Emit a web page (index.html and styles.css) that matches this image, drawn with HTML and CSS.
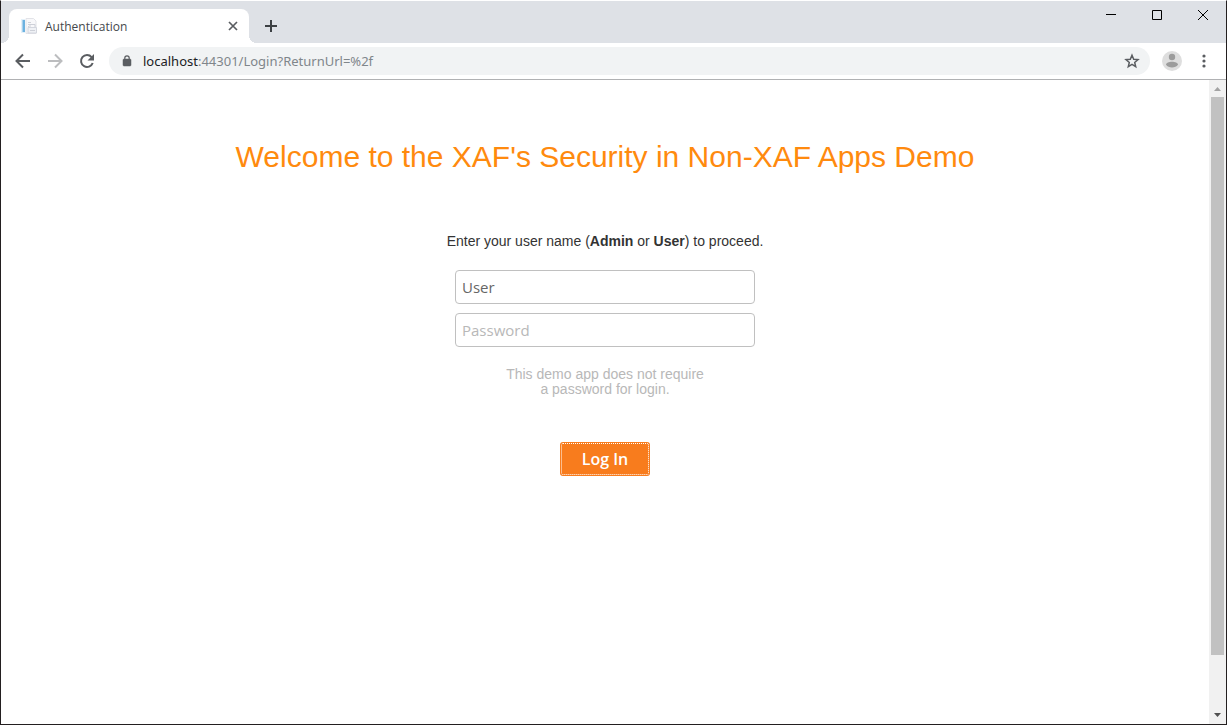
FILE: index.html
```html
<!DOCTYPE html>
<html lang="en">
<head>
<meta charset="utf-8">
<title>Authentication</title>
<link rel="stylesheet" href="styles.css">
</head>
<body>
<div class="window">
  <header class="tab-strip">
    <div class="tab">
      <svg class="favicon" width="16" height="16" viewBox="0 0 16 16">
        <path d="M5 .5h7.500l2.500 2.500v12.500H5z" fill="#f8f8fa" stroke="#e2e3e8"/>
        <path d="M0 1h4v14H0z" fill="#e3f0f9"/>
        <path d="M1.500 2H4v12H1.500z" fill="#6cb2e0"/>
        <path d="M7 4.500h3M7 6.500h2M7 8.500h1" stroke="#d0d2d8"/>
        <path d="M7 9.500h8.500v5.500H7z" fill="#eff1f5" stroke="#d3d6de"/>
        <path d="M9 12.500h5M9 9V6.500h5V9" fill="none" stroke="#cdd0d8"/>
      </svg>
      <span class="tab-title">Authentication</span>
      <button class="icon-button tab-close" aria-label="Close tab">
        <svg width="10" height="10" viewBox="0 0 10 10"><path d="M1 1l8 8M9 1L1 9" stroke="#5a5d61" stroke-width="1.700"/></svg>
      </button>
    </div>
    <button class="icon-button new-tab" aria-label="New tab">
      <svg width="12" height="12" viewBox="0 0 12 12"><path d="M6 0v12M0 6h12" stroke="#3c4043" stroke-width="2"/></svg>
    </button>
    <div class="window-controls">
      <button class="icon-button control" aria-label="Minimize"><svg width="10" height="10" viewBox="0 0 10 10"><path d="M0 4.500h10" stroke="#000"/></svg></button>
      <button class="icon-button control" aria-label="Maximize"><svg width="10" height="10" viewBox="0 0 10 10"><path d="M.5.5h9v9h-9z" fill="none" stroke="#000"/></svg></button>
      <button class="icon-button control" aria-label="Close"><svg width="10" height="10" viewBox="0 0 10 10"><path d="M0 0l10 10M10 0L0 10" stroke="#000"/></svg></button>
    </div>
  </header>

  <nav class="toolbar">
    <button class="icon-button nav-button" aria-label="Back"><svg width="16" height="16" viewBox="0 0 16 16"><path d="M15 8H2M8 1.500L1.500 8 8 14.500" fill="none" stroke="#5a5d61" stroke-width="2"/></svg></button>
    <button class="icon-button nav-button" aria-label="Forward"><svg width="16" height="16" viewBox="0 0 16 16"><path d="M1 8h13M8 1.500L14.500 8 8 14.500" fill="none" stroke="#bcbdbf" stroke-width="2"/></svg></button>
    <button class="icon-button nav-button" aria-label="Reload"><svg width="16" height="16" viewBox="0 0 16 16"><path d="M13.700 10A6 6 0 1 1 12.600 4.100" fill="none" stroke="#5a5d61" stroke-width="2"/><path d="M15 1v6.500H8.500z" fill="#5a5d61"/></svg></button>
    <div class="address-bar">
      <svg class="lock" width="10" height="12" viewBox="0 0 10 12"><path d="M2 4h6a1 1 0 0 1 1 1v5a1 1 0 0 1-1 1H2a1 1 0 0 1-1-1V5a1 1 0 0 1 1-1z" fill="#5a5d61" stroke="#5a5d61" stroke-width=".5"/><path d="M2.800 5V3a2.200 2.200 0 0 1 4.400 0v2" fill="none" stroke="#5a5d61" stroke-width="1.200"/></svg>
      <span class="url"><span class="host">localhost</span>:44301/Login?ReturnUrl=%2f</span>
      <button class="icon-button" aria-label="Bookmark"><svg width="16" height="16" viewBox="0 0 16 16"><path d="M8 2.200l1.700 4 4.300.4-3.300 2.800 1 4.200L8 11.400l-3.700 2.200 1-4.200L2 6.600l4.300-.4z" fill="none" stroke="#5a5d61" stroke-width="1.500"/></svg></button>
    </div>
    <button class="icon-button profile" aria-label="Profile"><svg width="20" height="20" viewBox="0 0 20 20"><circle cx="10" cy="10" r="10" fill="#dedede"/><circle cx="10" cy="6" r="3.200" fill="#9c9c9c"/><path d="M4 13.800C4 12 7 10.800 10 10.800s6 1.200 6 3c-1.300 1.800-3.500 2.800-6 2.800s-4.700-1-6-2.800z" fill="#9c9c9c"/></svg></button>
    <button class="icon-button" aria-label="Menu"><svg width="16" height="16" viewBox="0 0 16 16"><g fill="#5a5d61"><circle cx="8" cy="3" r="1.600"/><circle cx="8" cy="8" r="1.600"/><circle cx="8" cy="13" r="1.600"/></g></svg></button>
  </nav>

  <div class="viewport">
    <main class="page">
      <h1 class="heading">Welcome to the XAF's Security in Non-XAF Apps Demo</h1>
      <form class="login">
        <p class="intro">Enter your user name (<b>Admin</b> or <b>User</b>) to proceed.</p>
        <input class="field" type="text" aria-label="User name" value="User">
        <input class="field" type="password" aria-label="Password" placeholder="Password">
        <p class="note">This demo app does not require<br>a password for login.</p>
        <button class="submit" type="button">Log In</button>
      </form>
    </main>
    <div class="scrollbar">
      <svg class="arrow" width="17" height="17" viewBox="0 0 17 17"><path d="M5 11l3.500-4 3.500 4z" fill="#a3a3a3"/></svg>
      <div class="track"><div class="thumb"></div></div>
      <svg class="arrow" width="17" height="17" viewBox="0 0 17 17"><path d="M5 6h7l-3.500 4z" fill="#505050"/></svg>
    </div>
  </div>
</div>
</body>
</html>
```
FILE: styles.css
```css
* { box-sizing: border-box; }

body {
  margin: 0;
  font-family: "Liberation Sans", Arial, sans-serif;
  background: #fff;
}

.window {
  display: flex;
  flex-direction: column;
  min-height: 100vh;
  border: 1px solid #231f20;
  border-top-color: #fff;
}

.icon-button {
  display: flex;
  align-items: center;
  justify-content: center;
  padding: 0;
  border: 0;
  background: none;
}

.tab-strip {
  display: flex;
  height: 42px;
  padding-left: 8px;
  background: #dee1e6;
}

.tab {
  position: relative;
  display: flex;
  align-items: center;
  width: 240px;
  margin-top: 8px;
  padding: 0 11px 0 12px;
  border-radius: 8px 8px 0 0;
  background: #fff;
}

.tab::before,
.tab::after {
  content: "";
  position: absolute;
  bottom: 0;
  width: 8px;
  height: 8px;
}

.tab::before {
  right: 100%;
  background: radial-gradient(circle at 0 0, transparent 8px, #fff 8px);
}

.tab::after {
  left: 100%;
  background: radial-gradient(circle at 100% 0, transparent 8px, #fff 8px);
}

.tab-title {
  flex: 1;
  margin-left: 8px;
  font: 12px "Open Sans", sans-serif;
  color: #45484c;
}

.new-tab {
  width: 28px;
  margin: 8px 0 0 8px;
}

.window-controls {
  display: flex;
  height: 28px;
  margin-left: auto;
}

.control { width: 46px; }

.toolbar {
  display: flex;
  align-items: center;
  height: 37px;
  padding: 0 14px 0 6px;
  border-bottom: 1px solid #b0b1b3;
}

.nav-button {
  width: 32px;
  height: 28px;
}

.address-bar {
  display: flex;
  flex: 1;
  align-items: center;
  height: 28px;
  margin-left: 6px;
  padding: 0 10px 0 13px;
  border-radius: 14px;
  background: #f1f3f4;
}

.url {
  flex: 1;
  margin-left: 11px;
  font: 13px "Noto Sans", sans-serif;
  color: #80868b;
}

.host { color: #202124; }

.profile { margin: 0 14px 0 12px; }

.viewport {
  display: flex;
  flex: 1;
}

.page {
  flex: 1;
  padding: 59px 16px;
  text-align: center;
}

.heading {
  margin: 0;
  font-size: 30px;
  font-weight: 400;
  line-height: 36px;
  color: #ff8a0e;
}

.login {
  display: flex;
  flex-direction: column;
  align-items: center;
  margin-top: 57px;
}

.intro {
  margin: 0 0 20px;
  font-size: 14px;
  line-height: 18px;
  color: #333;
}

.field {
  width: 300px;
  height: 34px;
  margin-bottom: 9px;
  padding: 0 6px;
  border: 1px solid #c0c0c0;
  border-radius: 4px;
  font: 15px "Open Sans", sans-serif;
  color: #666;
}

.field::placeholder { color: #b8b8b8; }

.note {
  margin: 11px 0 45px;
  font-size: 14px;
  line-height: 15px;
  color: #b8b8b8;
}

.submit {
  width: 90px;
  height: 34px;
  padding: 0;
  border: 0;
  border-radius: 3px;
  outline: 1px dotted #fff;
  outline-offset: -2px;
  background: #f87c1d;
  font: 600 16px "Open Sans", sans-serif;
  color: #fff;
}

.scrollbar {
  display: flex;
  flex-direction: column;
  width: 17px;
  background: #f1f1f1;
}

.arrow { flex: none; }

.track {
  flex: 1;
  padding: 0 2px;
}

.thumb {
  height: 91.500%;
  background: #c1c1c1;
}
```
